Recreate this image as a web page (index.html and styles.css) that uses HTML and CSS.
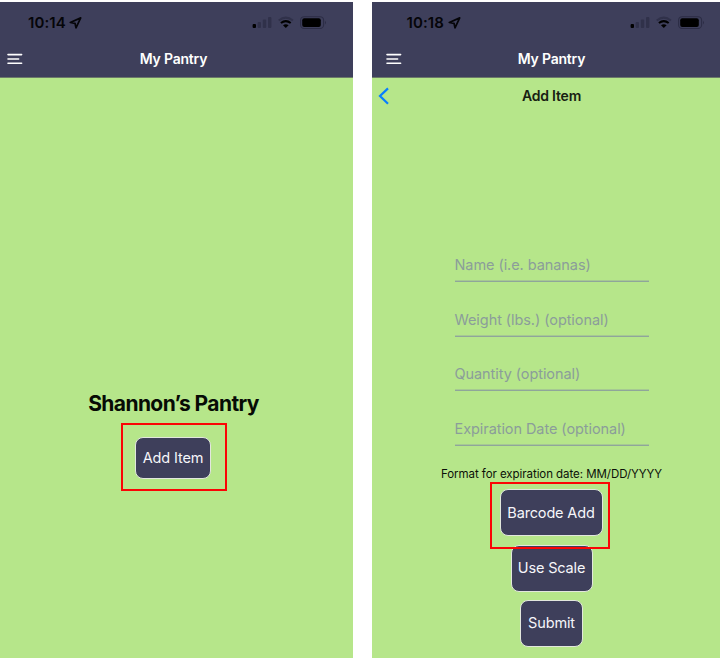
FILE: index.html
```html
<!DOCTYPE html>
<html lang="en">
<head>
<meta charset="utf-8">
<title>My Pantry</title>
<link rel="stylesheet" href="styles.css">
</head>
<body>
<svg class="defs" width="0" height="0" aria-hidden="true">
  <symbol id="arrow" viewBox="0 0 13 12"><path d="M11.7 .9 1.3 5.5 6 6.3 7 10.9Z" fill="none" stroke="#050509" stroke-width="1.7" stroke-linejoin="round"/></symbol>
  <symbol id="status" viewBox="0 0 76 14">
    <g fill="#30314a"><rect x="5.6" y="6" width="3.4" height="6" rx="1"/><rect x="10.8" y="3.5" width="3.4" height="8.5" rx="1"/><rect x="16" y="1" width="3.4" height="11" rx="1"/></g>
    <rect x=".6" y="8" width="3.4" height="4" rx="1" fill="#000"/>
    <g fill="none" stroke-width="2"><path d="M26.7 4.5Q33.8-1.3 40.9 4.5" stroke="#30314a"/><path d="M28.9 7.1Q33.8 3.1 38.7 7.1" stroke="#000"/></g>
    <path d="M31 9.3Q33.8 7.2 36.6 9.3L33.8 12Z" fill="#000"/>
    <rect x="48.6" y=".7" width="23" height="11.8" rx="3.6" fill="none" stroke="#2c2d45" stroke-width="1.1"/>
    <rect x="50.2" y="2.3" width="18.6" height="8.6" rx="2" fill="#000"/>
    <path d="M73 4.7Q75 6.5 73 8.4Z" fill="#2c2d45"/>
  </symbol>
  <symbol id="menu" viewBox="0 0 16 12"><path d="M1 1.6H14.6M1 6H11.6M1 10.3H14.6" stroke="#fff" stroke-width="1.6" stroke-linecap="round"/></symbol>
</svg>
<main class="screens">
  <section class="phone">
    <header class="top">
      <div class="status-bar"><span class="time">10:14</span><svg class="arrow"><use href="#arrow"/></svg><svg class="status"><use href="#status"/></svg></div>
      <div class="nav"><svg class="menu"><use href="#menu"/></svg><h1 class="title">My Pantry</h1></div>
    </header>
    <div class="home">
      <h2 class="pantry-name">Shannon’s Pantry</h2>
      <div class="highlight"><button class="btn add-item">Add Item</button></div>
    </div>
  </section>
  <section class="phone second">
    <header class="top">
      <div class="status-bar"><span class="time">10:18</span><svg class="arrow"><use href="#arrow"/></svg><svg class="status"><use href="#status"/></svg></div>
      <div class="nav"><svg class="menu"><use href="#menu"/></svg><h1 class="title">My Pantry</h1></div>
    </header>
    <div class="subnav"><svg class="back" viewBox="0 0 12 18"><path d="M10 1.4 2 9l8 7.8" fill="none" stroke="#087eff" stroke-width="2.2"/></svg><h2 class="title subtitle">Add Item</h2></div>
    <form class="form">
      <div class="field">Name (i.e. bananas)</div>
      <div class="field">Weight (lbs.) (optional)</div>
      <div class="field">Quantity (optional)</div>
      <div class="field">Expiration Date (optional)</div>
      <p class="hint">Format for expiration date: MM/DD/YYYY</p>
      <div class="highlight barcode-box"><button type="button" class="btn barcode">Barcode Add</button></div>
      <button type="button" class="btn scale">Use Scale</button>
      <button type="button" class="btn submit">Submit</button>
    </form>
  </section>
</main>
</body>
</html>
```
FILE: styles.css
```css
* { box-sizing: border-box; }
body { margin: 0; background: #fff; font-family: Inter, "Liberation Sans", sans-serif; }
h1, h2, p { margin: 0; }
.defs { display: none; }
.screens { display: grid; grid-template-columns: 353px 348px; column-gap: 19px; height: 658px; padding-top: 2px; overflow: hidden; }
.phone { height: 656px; background: #b6e68a; overflow: hidden; }
.top { height: 76px; background: #3e3f5b; border-bottom: 1px solid #6b7a69; }
.status-bar { display: flex; align-items: flex-start; height: 38px; padding: 14px 0 0 28px; }
.second .status-bar { padding-left: 34.5px; }
.time { width: 41px; font-size: 15px; line-height: 14px; font-weight: 600; letter-spacing: .1px; color: #050509; }
.arrow { width: 13px; height: 12px; margin-top: 1px; }
.status { width: 76px; height: 14px; margin-left: 169.5px; }
.nav { display: grid; grid-template-columns: 347px; align-items: center; height: 37px; }
.nav > *, .subnav > * { grid-area: 1 / 1; }
.menu { width: 16px; height: 12px; margin-left: 7px; }
.second .menu { margin-left: 7.5px; }
.title { text-align: center; font-size: 14px; line-height: 18px; font-weight: 600; letter-spacing: -.2px; color: #fff; }
.second .nav, .subnav { margin-left: 6px; }
.home { display: flex; flex-direction: column; align-items: center; width: 347px; padding-top: 312px; }
.pantry-name { font-size: 21px; line-height: 28px; font-weight: 700; letter-spacing: -.6px; color: #070b05; white-space: nowrap; }
.highlight { display: flex; justify-content: center; border: 2px solid #fb0505; }
.home .highlight { width: 106px; height: 68px; margin-top: 5px; padding-top: 12px; }
.btn { display: block; flex: none; padding: 0; border: 1.5px solid #e2e7dd; border-radius: 8px; background: #3e3f5b; color: #f6f6fa; font: 400 14.5px/20px Inter, "Liberation Sans", sans-serif; letter-spacing: -.15px; white-space: nowrap; }
.add-item { width: 76px; height: 42px; margin-right: 1px; }
.subnav { display: grid; grid-template-columns: 347px; align-items: center; height: 36px; }
.subtitle { color: #172012; }
.back { width: 12px; height: 18px; }
.form { display: flex; flex-direction: column; align-items: center; width: 359px; padding-top: 138px; }
.field { width: 194px; height: 54.6px; padding-top: 3px; font-size: 14.5px; line-height: 20px; letter-spacing: -.07px; color: #8b9d9a; white-space: nowrap; }
.field::after { content: ""; display: block; height: 1px; margin-top: 6px; background: #8fa69a; box-shadow: 0 -1px #a6c993; }
.hint { height: 16px; margin-top: -4px; font-size: 11.5px; line-height: 16px; letter-spacing: -.06px; color: #0b1008; white-space: nowrap; }
.barcode-box { position: relative; z-index: 1; width: 120px; height: 67px; margin-right: 3px; padding: 5px 0 0 2px; }
.barcode { width: 103px; height: 47px; }
.scale { width: 82px; height: 47px; margin-top: -4.4px; }
.submit { width: 63px; height: 47px; margin-top: 8px; }
```
